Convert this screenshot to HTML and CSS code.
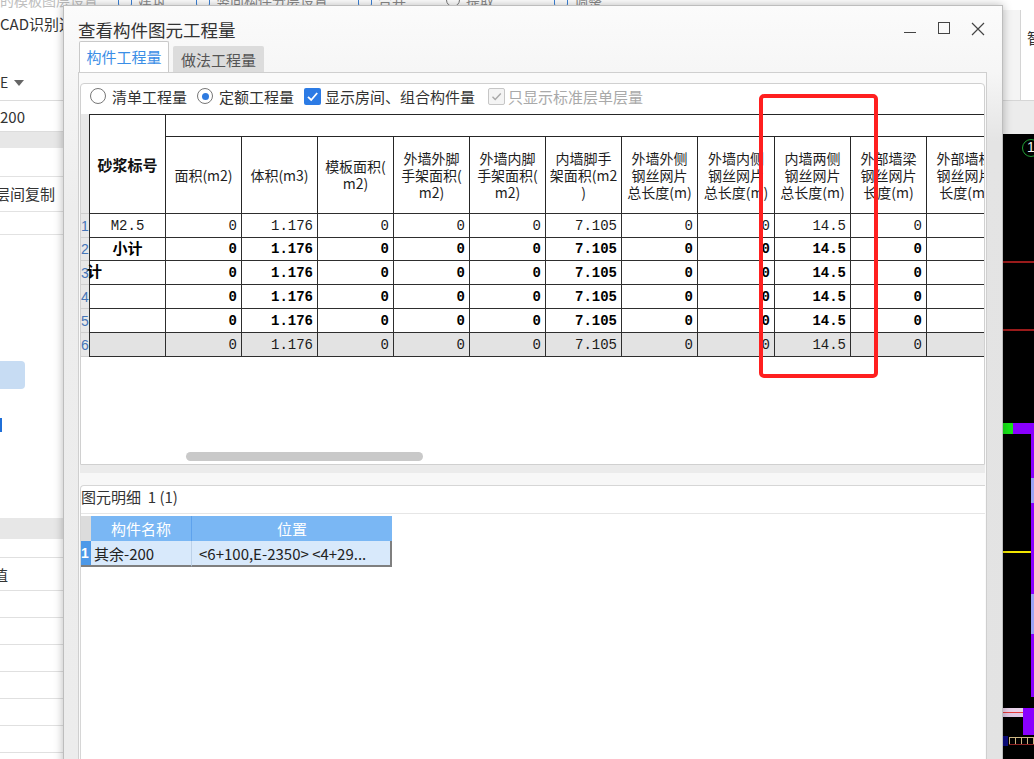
FILE: index.html
```html
<!DOCTYPE html>
<html lang="zh-CN">
<head>
<meta charset="utf-8">
<title>查看构件图元工程量</title>
<link rel="stylesheet" href="styles.css">
</head>
<body>
<div class="desk">
  <div class="topbar">
    <span class="tb tb1">的模板图层设置</span>
    <span class="tb tb2"><i class="tico"></i>建筑</span>
    <span class="tb tb3"><i class="tico sq"></i>竖向构件分层设置</span>
    <span class="tb tb4"><i class="tico"></i>合并</span>
    <span class="tb tb5"><i class="tico ring"></i>提取</span>
    <span class="tb tb6"><i class="tico"></i>调整</span>
  </div>
  <div class="app">
    <aside class="left">
      <div class="lp-cad">CAD识别选项</div>
      <div class="lp-sel">E <span class="caret"></span></div>
      <div class="lp-input">200</div>
      <div class="lp-band"></div>
      <div class="lp-row lp-copy"><span class="clip">层间复制</span></div>
      <div class="lp-row lp-short"></div>
      <div class="lp-hl"></div>
      <div class="lp-mark"></div>
      <div class="lp-band2"></div>
      <div class="lp-list">
        <div class="lp-li first"><span class="clip2">值</span></div>
        <div class="lp-li"></div>
        <div class="lp-li"></div>
        <div class="lp-li"></div>
        <div class="lp-li"></div>
        <div class="lp-li"></div>
        <div class="lp-li"></div>
      </div>
    </aside>
    <main class="mid"></main>
    <aside class="right">
      <div class="rc-top">
        <div class="rc-grip"></div>
        <div class="rc-tool">智</div>
      </div>
      <div class="rc-mid"></div>
      <div class="canvas">
        <div class="cad axis">1</div>
        <div class="cad red r1"></div>
        <div class="cad red r2"></div>
        <div class="cad green"></div>
        <div class="cad pband"></div>
        <div class="cad pvert"><i class="lav l1"></i><i class="lav l2"></i></div>
        <div class="cad yellow"></div>
        <div class="cad pink"></div>
        <div class="cad pblock"></div>
        <div class="cad navy"></div>
        <div class="cad ticks"></div>
      </div>
    </aside>
  </div>

  <section class="dialog">
    <div class="titlebar">
      <div class="title">查看构件图元工程量</div>
      <div class="winctl">
        <span class="wbtn"><svg width="14" height="14" viewBox="0 0 14 14"><line x1="1" y1="10.5" x2="13" y2="10.5" stroke="#444" stroke-width="1"/></svg></span>
        <span class="wbtn"><svg width="14" height="14" viewBox="0 0 14 14"><rect x="1.5" y="0.5" width="11" height="11" fill="none" stroke="#444" stroke-width="1"/></svg></span>
        <span class="wbtn"><svg width="14" height="14" viewBox="0 0 14 14"><path d="M1 1 L13 13 M13 1 L1 13" stroke="#444" stroke-width="1.2" fill="none"/></svg></span>
      </div>
    </div>
    <div class="tabs">
      <div class="tab active">构件工程量</div>
      <div class="tab">做法工程量</div>
    </div>
    <div class="body">
      <div class="content">
        <div class="upper">
          <div class="opts">
            <span class="radio"></span><span class="lbl">清单工程量</span>
            <span class="radio on"></span><span class="lbl">定额工程量</span>
            <span class="cb"><svg width="13" height="13" viewBox="0 0 13 13"><path d="M2 6.8 L5.2 10 L11.2 3" stroke="#fff" stroke-width="1.8" fill="none"/></svg></span><span class="lbl cbl">显示房间、组合构件量</span>
            <span class="cb dis"><svg width="13" height="13" viewBox="0 0 13 13"><path d="M2.5 6.8 L5.2 9.5 L10.8 3.5" stroke="#a8a8a8" stroke-width="1.4" fill="none"/></svg></span><span class="lbl dlbl">只显示标准层单层量</span>
          </div>
          <div class="tablewrap">
            <div class="grid">
              <div class="rh rh-head"></div>
              <div class="h h-key">砂浆标号</div>
              <div class="h h-top"></div>
              <div class="h">面积(m2)</div>
              <div class="h">体积(m3)</div>
              <div class="h">模板面积(<br>m2)</div>
              <div class="h">外墙外脚<br>手架面积(<br>m2)</div>
              <div class="h">外墙内脚<br>手架面积(<br>m2)</div>
              <div class="h">内墙脚手<br>架面积(m2<br>)</div>
              <div class="h">外墙外侧<br>钢丝网片<br>总长度(m)</div>
              <div class="h">外墙内侧<br>钢丝网片<br>总长度(m)</div>
              <div class="h">内墙两侧<br>钢丝网片<br>总长度(m)</div>
              <div class="h">外部墙梁<br>钢丝网片<br>长度(m)</div>
              <div class="h">外部墙柱<br>钢丝网片<br>长度(m)</div>

              <div class="row">
                <div class="rn">1</div>
                <div class="d lab mono">M2.5</div>
                <div class="d">0</div><div class="d">1.176</div><div class="d">0</div><div class="d">0</div><div class="d">0</div><div class="d">7.105</div><div class="d">0</div><div class="d">0</div><div class="d">14.5</div><div class="d">0</div><div class="d"></div>
              </div>
              <div class="row b">
                <div class="rn">2</div>
                <div class="d lab cjk">小计</div>
                <div class="d">0</div><div class="d">1.176</div><div class="d">0</div><div class="d">0</div><div class="d">0</div><div class="d">7.105</div><div class="d">0</div><div class="d">0</div><div class="d">14.5</div><div class="d">0</div><div class="d"></div>
              </div>
              <div class="row b">
                <div class="rn">3</div>
                <div class="d labl cjk"><span class="ji">计</span></div>
                <div class="d">0</div><div class="d">1.176</div><div class="d">0</div><div class="d">0</div><div class="d">0</div><div class="d">7.105</div><div class="d">0</div><div class="d">0</div><div class="d">14.5</div><div class="d">0</div><div class="d"></div>
              </div>
              <div class="row b">
                <div class="rn">4</div>
                <div class="d"></div>
                <div class="d">0</div><div class="d">1.176</div><div class="d">0</div><div class="d">0</div><div class="d">0</div><div class="d">7.105</div><div class="d">0</div><div class="d">0</div><div class="d">14.5</div><div class="d">0</div><div class="d"></div>
              </div>
              <div class="row b">
                <div class="rn">5</div>
                <div class="d"></div>
                <div class="d">0</div><div class="d">1.176</div><div class="d">0</div><div class="d">0</div><div class="d">0</div><div class="d">7.105</div><div class="d">0</div><div class="d">0</div><div class="d">14.5</div><div class="d">0</div><div class="d"></div>
              </div>
              <div class="row g last">
                <div class="rn">6</div>
                <div class="d"></div>
                <div class="d">0</div><div class="d">1.176</div><div class="d">0</div><div class="d">0</div><div class="d">0</div><div class="d">7.105</div><div class="d">0</div><div class="d">0</div><div class="d">14.5</div><div class="d">0</div><div class="d"></div>
              </div>
            </div>
          </div>
          <div class="hscroll"><div class="thumb"></div></div>
        </div>
        <div class="splitter"></div>
        <div class="lower">
          <div class="lower-head">图元明细&nbsp;&nbsp;1 (1)</div>
          <div class="mini">
            <div class="m-rh"></div>
            <div class="m-h">构件名称</div>
            <div class="m-h m-h2">位置</div>
            <div class="m-rn">1</div>
            <div class="m-d">其余-200</div>
            <div class="m-d m-d2">&lt;6+100,E-2350&gt; &lt;4+29...</div>
          </div>
        </div>
      </div>
      <div class="gutter"></div>
    </div>
  </section>

  <div class="redbox"></div>
</div>
</body>
</html>
```

FILE: styles.css
```css
* { box-sizing: border-box; }
html, body { margin: 0; padding: 0; }
body {
  font-family: "Noto Sans CJK SC", "Noto Sans", sans-serif;
  color: #333;
  background: #fff;
}
.desk {
  position: relative;
  width: 1034px;
  height: 759px;
  overflow: hidden;
  display: flex;
  flex-direction: column;
  background: #fff;
}

/* background app toolbar (mostly hidden) */
.topbar {
  height: 10px;
  flex: none;
  display: flex;
  overflow: hidden;
  background: #fff;
}
.tb {
  display: flex;
  align-items: center;
  font-size: 14px;
  line-height: 16px;
  color: #8a8a8a;
  margin-top: -11px;
  white-space: nowrap;
}
.tb1 { margin-left: 0; color: #bdbdbd; }
.tb2 { margin-left: 20px; }
.tb3 { margin-left: 30px; }
.tb4 { margin-left: 30px; }
.tb5 { margin-left: 40px; }
.tb6 { margin-left: 60px; }
.tico {
  width: 14px; height: 14px;
  border: 1.5px solid #3b82d8;
  border-radius: 3px;
  margin-right: 6px;
}
.tico.ring { border-radius: 50%; border-color: #777; }

.app { flex: 1; display: flex; min-height: 0; }

/* left app panel */
.left {
  width: 63px;
  flex: none;
  display: flex;
  flex-direction: column;
  overflow: hidden;
  background: #fff;
  font-size: 15px;
  color: #333;
  white-space: nowrap;
}
.lp-cad { height: 27px; line-height: 27px; flex: none; }
.lp-sel {
  height: 25px; margin-top: 33px; line-height: 25px; flex: none;
  display: flex; align-items: center; gap: 6px; font-size: 14px;
}
.caret {
  width: 0; height: 0;
  border-left: 5px solid transparent;
  border-right: 5px solid transparent;
  border-top: 6px solid #666;
}
.lp-input {
  height: 32px; margin-top: 5px; flex: none;
  border-top: 1px solid #dcdcdc;
  border-bottom: 1px solid #dcdcdc;
  line-height: 32px;
  font-size: 15px;
}
.lp-band { height: 16px; flex: none; background: #e7e7e7; }
.lp-row { flex: none; border-bottom: 1px solid #e2e2e2; }
.lp-copy {
  height: 36px; margin-top: 28px;
  border-top: 1px solid #e2e2e2;
  line-height: 34px;
}
.clip { margin-left: -5px; }
.lp-short { height: 23px; }
.lp-hl {
  flex: none;
  width: 25px; height: 28px;
  margin-top: 126px;
  background: #c7dcf3;
  border-radius: 0 4px 4px 0;
}
.lp-mark {
  flex: none;
  width: 2px; height: 14px;
  margin-top: 29px;
  background: #1f6fd8;
}
.lp-band2 { flex: none; height: 21px; margin-top: 86px; background: #e7e7e7; }
.lp-list { flex: none; margin-top: 18px; border-top: 1px solid #e0e0e0; }
.lp-li { height: 27px; border-bottom: 1px solid #e0e0e0; }
.lp-li.first { height: 33px; line-height: 33px; font-size: 15px; }
.clip2 { margin-left: -7px; }

.mid { flex: 1; background: #fff; }

/* right edge: CAD canvas */
.right {
  width: 31px;
  flex: none;
  display: flex;
  flex-direction: column;
}
.rc-top { height: 90px; flex: none; display: flex; background: #fff; }
.rc-grip { width: 17px; background: #f4f4f4; }
.rc-tool {
  flex: 1;
  border-left: 1px solid #d4d4d4;
  padding-left: 6px;
  padding-top: 19px;
  font-size: 15px;
  line-height: 18px;
  color: #333;
  white-space: nowrap;
  overflow: hidden;
}
.rc-mid { height: 34px; flex: none; background: #ececec; border-top: 1px solid #d6d6d6; }
.canvas { flex: 1; position: relative; background: #000; overflow: hidden; }
.cad { position: absolute; }
.axis {
  left: 19px; top: 5px; width: 18px; height: 18px;
  border: 1.5px solid #1f9e35;
  border-radius: 50%;
  color: #f0f0f0;
  font-family: "Liberation Sans", sans-serif;
  font-size: 14px;
  line-height: 15px;
  text-align: center;
}
.red { left: 0; width: 31px; height: 2px; background: #9a1b1b; }
.r1 { top: 127px; }
.r2 { top: 195px; }
.green { left: 0; top: 289px; width: 10px; height: 11px; background: #17e617; }
.pband { left: 10px; top: 289px; width: 21px; height: 11px; background: #8a00ff; }
.pvert { left: 28px; top: 300px; width: 3px; height: 263px; background: #8a00ff; }
.lav { position: absolute; left: 0; width: 3px; background: #9aa3f5; }
.l1 { top: 44px; height: 25px; }
.l2 { top: 160px; height: 40px; }
.yellow { left: 0; top: 417px; width: 28px; height: 2px; background: #f2e600; }
.pink {
  left: 0; top: 574px; width: 20px; height: 9px;
  background: linear-gradient(#e9d3ea 0, #e9d3ea 4px, #e63b3b 4px, #e63b3b 5px, #e0c8e4 5px);
}
.pblock { left: 20px; top: 574px; width: 11px; height: 27px; background: #8a00ff; }
.navy { left: 0; top: 602px; width: 5px; height: 10px; background: #0c0c80; }
.ticks {
  left: 6px; top: 603px; width: 25px; height: 8px;
  border-top: 1px solid #cdb784;
  border-bottom: 1px solid #8f2525;
  background: repeating-linear-gradient(90deg, #cdb784 0, #cdb784 1px, transparent 1px, transparent 6px);
}

/* dialog window */
.dialog {
  position: absolute;
  left: 63px;
  top: 5px;
  width: 940px;
  height: 770px;
  border: 1px solid #bdbdbd;
  background: linear-gradient(#fbfbfb 0, #f4f4f4 90px, #ededed 200px, #ececec);
  box-shadow: 0 0 9px rgba(0, 0, 0, 0.28);
  display: flex;
  flex-direction: column;
}
.titlebar { height: 35px; flex: none; display: flex; align-items: flex-start; }
.title {
  margin-top: 12px;
  margin-left: 14px;
  font-size: 17.5px;
  line-height: 23px;
  color: #333;
}
.winctl { margin-left: auto; margin-top: 16px; margin-right: 7px; display: flex; }
.wbtn { width: 34px; height: 14px; display: flex; justify-content: center; }
.wbtn svg { display: block; }

.tabs {
  height: 31px;
  flex: none;
  display: flex;
  align-items: flex-end;
  padding-left: 15px;
  gap: 4px;
}
.tab {
  width: 91px;
  height: 26px;
  background: #dcdcdc;
  color: #555;
  font-size: 15px;
  display: flex;
  align-items: center;
  justify-content: center;
  border-radius: 2px 2px 0 0;
}
.tab.active {
  width: 90px;
  height: 31px;
  background: #fff;
  border: 1px solid #c9c9c9;
  border-bottom: none;
  color: #3a8ee6;
  padding-bottom: 1px;
}

.body { flex: 1; display: flex; min-height: 0; }
.content {
  margin-left: 14px;
  width: 909px;
  flex: none;
  border: 1px solid #cfcfcf;
  border-bottom: none;
  background: #fafafa;
  padding: 10px 1px 0 1px;
  display: flex;
  flex-direction: column;
}
.gutter { flex: 1; background: linear-gradient(#f6f6f6 0, #e4e4e4 70px, #e3e3e3); }

.upper {
  height: 382px;
  flex: none;
  border: 1px solid #d0d0d0;
  border-radius: 4px 4px 0 0;
  background: #fff;
  display: flex;
  flex-direction: column;
  overflow: hidden;
}
.opts {
  height: 30px;
  flex: none;
  display: flex;
  align-items: center;
  padding: 0 0 6px 9px;
  font-size: 15px;
  color: #333;
  white-space: nowrap;
}
.radio {
  width: 16px; height: 16px;
  border: 1px solid #777;
  border-radius: 50%;
  background: #fff;
  margin-right: 6px;
  display: flex;
  align-items: center;
  justify-content: center;
  flex: none;
}
.radio.on::after {
  content: "";
  width: 7px; height: 7px;
  border-radius: 50%;
  background: #2f7be0;
}
.lbl { margin-right: 10px; }
.cb {
  width: 17px; height: 17px;
  border-radius: 2px;
  background: #2c7be5;
  display: flex;
  align-items: center;
  justify-content: center;
  flex: none;
}
.cbl { margin-left: 4px; margin-right: 13px; }
.cb.dis { background: #f4f4f4; border: 1px solid #c6c6c6; }
.dlbl { margin-left: 3px; color: #a9a9a9; }

.tablewrap { flex: 1; overflow: hidden; min-height: 0; }
.grid {
  display: grid;
  grid-template-columns: 8px 76px 76px 76px 76px 76px 76px 76px 76px 77px 76px 76px 76px;
  grid-template-rows: 22px 77px 24px 23px 24px 24px 24px 25px;
  width: max-content;
}
.row { display: contents; }
.rh { background: #e8e8e8; }
.rh-head { grid-row: 1 / 3; grid-column: 1; }
.h {
  border-top: 1px solid #262626;
  border-left: 1px solid #262626;
  display: flex;
  align-items: center;
  justify-content: center;
  text-align: center;
  font-size: 14px;
  line-height: 17px;
  color: #1e1e1e;
  white-space: nowrap;
  overflow: hidden;
}
.h-key { grid-row: 1 / 3; grid-column: 2; font-weight: bold; font-size: 15px; color: #111; }
.h-top { grid-row: 1; grid-column: 3 / -1; }
.rn {
  background: #e8e8e8;
  border-top: 1px solid #cfcfcf;
  color: #4676b8;
  font-family: "Liberation Sans", sans-serif;
  font-size: 14px;
  display: flex;
  align-items: center;
  overflow: visible;
}
.d {
  border-top: 1px solid #2e2e2e;
  border-left: 1px solid #2e2e2e;
  display: flex;
  align-items: center;
  justify-content: flex-end;
  padding-right: 4px;
  font-family: "Liberation Mono", monospace;
  font-size: 14px;
  color: #1a1a1a;
  white-space: nowrap;
}
.b .d { font-weight: bold; color: #000; }
.g .d { background: #e3e3e3; }
.last .d { border-bottom: 1px solid #2e2e2e; }
.last .rn { border-bottom: 1px solid #cfcfcf; }
.d.lab { justify-content: center; padding-right: 0; }
.d.cjk {
  font-family: "Noto Sans CJK SC", sans-serif;
  font-size: 15px;
  line-height: 1;
  padding-bottom: 4px;
}
.d.labl { justify-content: flex-start; padding-right: 0; overflow: visible; }
.ji { margin-left: -3px; }

.hscroll { height: 14px; flex: none; }
.thumb {
  margin: 2px 0 0 105px;
  width: 237px;
  height: 9px;
  border-radius: 5px;
  background: #c9c9c9;
}

.splitter {
  height: 20px;
  flex: none;
  background: linear-gradient(#ebebeb 0, #ebebeb 8px, #f7f7f7 8px);
}
.lower {
  flex: 1;
  background: #fff;
  border-top: 1px solid #d6d6d6;
  border-left: 1px solid #d6d6d6;
  border-radius: 4px 0 0 0;
}
.lower-head {
  height: 28px;
  line-height: 22px;
  font-size: 15px;
  color: #333;
  border-bottom: 1px solid #e6e6e6;
  white-space: nowrap;
}
.mini {
  margin-top: 2px;
  display: grid;
  grid-template-columns: 10px 100px 201px;
  grid-template-rows: 25px 26px;
  width: max-content;
  font-size: 15px;
}
.m-rh { background: #dcdcdc; }
.m-h {
  background: #7ab7f4;
  color: #fff;
  display: flex;
  align-items: center;
  justify-content: center;
}
.m-h2 { border-left: 1px solid #5ea2ec; }
.m-rn {
  background: #4d99e8;
  color: #fff;
  font-weight: bold;
  font-family: "Liberation Sans", sans-serif;
  font-size: 14px;
  display: flex;
  align-items: center;
  border-bottom: 2px solid #7f7f7f;
}
.m-d {
  background: #d8e9fb;
  color: #222;
  display: flex;
  align-items: center;
  padding-left: 3px;
  border-bottom: 2px solid #7f7f7f;
  white-space: nowrap;
  overflow: hidden;
}
.m-d2 {
  padding-left: 7px;
  border-left: 1px solid #bcd1e8;
  border-right: 2px solid #7f7f7f;
}

/* annotation overlay */
.redbox {
  position: absolute;
  left: 759px;
  top: 94px;
  width: 119px;
  height: 284px;
  border: 4px solid #ff1f1f;
  border-radius: 5px;
}
```
